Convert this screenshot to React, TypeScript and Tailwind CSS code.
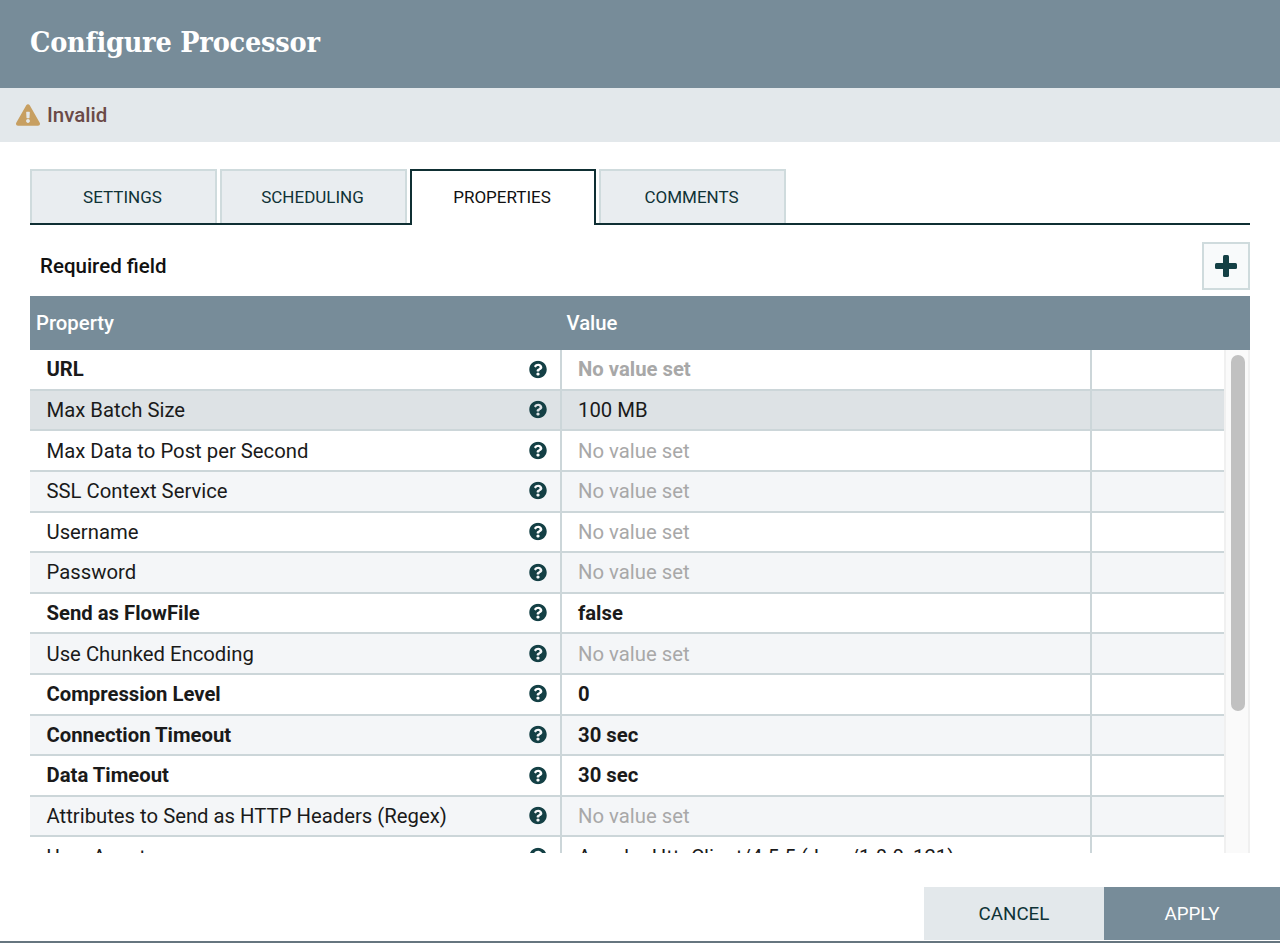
import { FaExclamationTriangle, FaQuestionCircle } from "react-icons/fa";

interface Row {
  name: string;
  value?: string;
  required?: boolean;
}

const rows: Row[] = [
  { name: "URL", required: true },
  { name: "Max Batch Size", value: "100 MB" },
  { name: "Max Data to Post per Second" },
  { name: "SSL Context Service" },
  { name: "Username" },
  { name: "Password" },
  { name: "Send as FlowFile", value: "false", required: true },
  { name: "Use Chunked Encoding" },
  { name: "Compression Level", value: "0", required: true },
  { name: "Connection Timeout", value: "30 sec", required: true },
  { name: "Data Timeout", value: "30 sec", required: true },
  { name: "Attributes to Send as HTTP Headers (Regex)" },
  { name: "User Agent", value: "Apache-HttpClient/4.5.5 (Java/1.8.0_121)" },
];

const tabs = ["SETTINGS", "SCHEDULING", "PROPERTIES", "COMMENTS"];

export default function App() {
  return (
    <div className="relative h-[943px] w-[1280px] overflow-hidden bg-white font-['Roboto',sans-serif]">
      <div className="flex h-[88px] items-center bg-[#778c99] pb-[3px] pl-[30px]">
        <h1 className="font-['DejaVu_Serif_Condensed','DejaVu_Serif',serif] text-[28.5px] font-bold tracking-[-0.2px] text-white">Configure Processor</h1>
      </div>
      <div className="flex h-[54px] items-center gap-[7px] bg-[#e3e8eb] pl-[16px]">
        <FaExclamationTriangle className="h-[24px] w-[24px] text-[#c79f61]" />
        <span className="text-[20.5px] font-medium text-[#6b4a47]">Invalid</span>
      </div>

      <div className="px-[30px] pt-[27px]">
        <div className="flex h-[56px] gap-[3px] border-b-2 border-[#0f2f33]">
          {tabs.map((t) =>
            t === "PROPERTIES" ? (
              <div key={t} className="z-10 -mb-[2px] flex h-[56px] w-[186px] items-center justify-center border-x-2 border-t-2 border-[#0f2f33] bg-white pr-[2px] text-[17px] text-[#111]">
                {t}
              </div>
            ) : (
              <div key={t} className="flex h-[54px] w-[187px] items-center justify-center border-2 border-b-0 border-[#cfdbdd] bg-[#e9edf0] pr-[2px] pt-[2px] text-[17px] text-[#0f3236]">
                {t}
              </div>
            )
          )}
        </div>

        <div className="flex h-[71px] items-center justify-between pl-[10px]">
          <span className="mt-[11px] text-[20.5px] font-medium text-[#111]">Required field</span>
          <button className="mt-[10px] flex h-[48px] w-[48px] items-center justify-center border-2 border-[#cfdbdd] bg-[#f8fafb]">
            <svg viewBox="0 0 22 22" className="-ml-[1px] h-[22px] w-[22px] fill-[#144045]">
              <rect x="8" y="0" width="6" height="22" rx="1.5" />
              <rect x="0" y="8" width="22" height="6" rx="1.5" />
            </svg>
          </button>
        </div>

        <div className="flex h-[54px] items-center bg-[#778c99] text-[20.3px] font-medium text-white">
          <div className="w-[536.5px] pl-[6px]">Property</div>
          <div>Value</div>
        </div>

        <div className="flex h-[503px] overflow-hidden">
          <div className="w-[1194px] pt-[0.3px]">
            {rows.map((r, i) => {
              const bg = r.name === "Max Batch Size" ? "bg-[#dde2e5]" : i % 2 === 0 ? "bg-white" : "bg-[#f4f6f8]";
              return (
                <div key={r.name} className={`flex h-[40.6px] shrink-0 border-b-2 border-[#ccd6d9] text-[20.3px] ${bg}`}>
                  <div className={`flex w-[532px] items-center justify-between border-r-2 border-[#ccd6d9] pl-[16.5px] pr-[13.5px] text-[#1a1a1a] ${r.required ? "font-bold" : ""}`}>
                    <span>{r.name}</span>
                    <FaQuestionCircle className="h-[18px] w-[18px] -translate-y-[0.5px] text-[#144045]" />
                  </div>
                  <div className={`flex w-[530px] items-center whitespace-nowrap border-r-2 border-[#ccd6d9] pl-[16px] ${r.value ? "text-[#1a1a1a]" : "text-[#a8a8a8]"} ${r.required ? "font-bold" : ""}`}>
                    {r.value ?? "No value set"}
                  </div>
                </div>
              );
            })}
          </div>
          <div className="relative w-[26px] border-x-2 border-[#f0f0f0] bg-[#fafafa]">
            <div className="absolute left-[5px] top-[5px] h-[356px] w-[14px] rounded-full bg-[#c1c1c1]" />
          </div>
        </div>
      </div>

      <div className="absolute bottom-0 left-0 right-0 h-[2px] bg-[#66757f]" />
      <div className="absolute bottom-[3px] right-0 flex h-[53px] text-[18.75px]">
        <button className="w-[180px] bg-[#e3e8eb] pt-[2px] text-[#0f3236]">CANCEL</button>
        <button className="w-[176px] bg-[#778c99] pt-[2px] text-white">APPLY</button>
      </div>
    </div>
  );
}
